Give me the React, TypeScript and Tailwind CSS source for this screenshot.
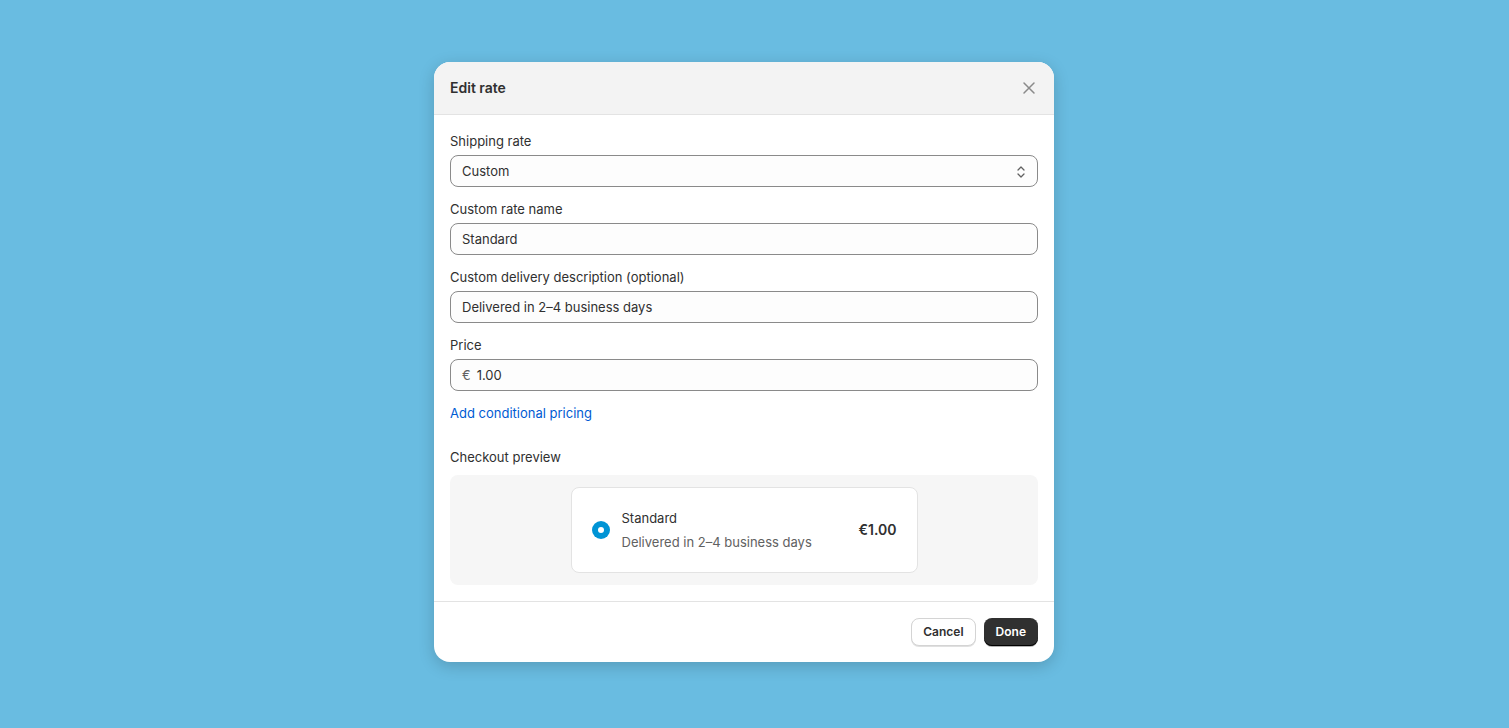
import React from "react";

function Field({ label, children }: { label: string; children: React.ReactNode }) {
  return (
    <div className="flex flex-col gap-1">
      <div className="h-5 leading-5 text-[13px] text-[#303030]">{label}</div>
      {children}
    </div>
  );
}

function Input({ value, prefix }: { value: string; prefix?: string }) {
  return (
    <div className="h-8 rounded-lg border border-[#8a8a8a] bg-[#fdfdfd] pl-[11px] pr-3 pt-px flex items-center text-[13px] text-[#303030]">
      {prefix && <span className="mr-[6px] text-[#616161]">{prefix}</span>}
      <span>{value}</span>
    </div>
  );
}

export default function App() {
  return (
    <div
      className="w-[1509px] h-[728px] bg-[#69bce1] flex justify-start pl-[434px] pt-[62px]"
      style={{ fontFamily: "Inter, 'Noto Sans', sans-serif" }}
    >
      <div className="w-[620px] h-[600px] bg-white rounded-2xl overflow-hidden shadow-[0_4px_16px_rgba(0,0,0,0.18)] flex flex-col">
        <div className="h-[53px] bg-[#f3f3f3] border-b border-[#e3e3e3] flex items-center justify-between pl-4 pr-[18px]">
          <div className="text-sm font-semibold text-[#303030]">Edit rate</div>
          <svg width="14" height="14" viewBox="0 0 14 14" className="text-[#8a8a8a]">
            <path d="M2 2 L12 12 M12 2 L2 12" stroke="currentColor" strokeWidth="1.5" strokeLinecap="round" />
          </svg>
        </div>
        <div className="px-4 pt-4 pb-4 flex flex-col border-b border-[#e3e3e3]">
          <div className="flex flex-col gap-3">
            <Field label="Shipping rate">
              <div className="h-8 rounded-lg border border-[#8a8a8a] bg-[#fdfdfd] pl-[11px] pr-[10px] pt-px flex items-center justify-between text-[13px] text-[#303030]">
                <span>Custom</span>
                <svg width="12" height="16" viewBox="0 0 12 16" className="text-[#616161]">
                  <path d="M3 6 L6 3 L9 6 M3 10 L6 13 L9 10" stroke="currentColor" strokeWidth="1.3" fill="none" strokeLinecap="round" strokeLinejoin="round" />
                </svg>
              </div>
            </Field>
            <Field label="Custom rate name">
              <Input value="Standard" />
            </Field>
            <Field label="Custom delivery description (optional)">
              <Input value="Delivered in 2–4 business days" />
            </Field>
            <Field label="Price">
              <Input value="1.00" prefix="€" />
            </Field>
            <div className="h-5 leading-5 text-[13px] text-[#005bd3]">Add conditional pricing</div>
          </div>
          <div className="mt-6 h-5 leading-5 text-[13px] text-[#303030]">Checkout preview</div>
          <div className="mt-2 h-[110px] rounded-lg bg-[#f6f6f6] flex justify-center pt-3">
            <div className="w-[347px] h-[86px] bg-white rounded-lg border border-[#e3e3e3] flex items-center justify-between pl-5 pr-5">
              <div className="flex items-center gap-3">
                <div className="w-[18px] h-[18px] rounded-full bg-[#0094d5] flex items-center justify-center">
                  <div className="w-[6px] h-[6px] rounded-full bg-white" />
                </div>
                <div className="flex flex-col gap-1">
                  <div className="text-[13px] leading-5 text-[#303030]">Standard</div>
                  <div className="text-[13px] leading-5 text-[#616161]">Delivered in 2–4 business days</div>
                </div>
              </div>
              <div className="text-sm font-semibold text-[#303030]">€1.00</div>
            </div>
          </div>
        </div>
        <div className="flex-1 flex items-center justify-end gap-2 px-4">
          <div className="h-7 px-[11px] rounded-lg border border-[#d4d4d4] bg-white shadow-[0_1px_0_rgba(0,0,0,0.12)] flex items-center text-xs font-semibold text-[#303030]">
            Cancel
          </div>
          <div className="h-7 px-3 rounded-lg bg-[#303030] shadow-[inset_0_-1px_0_#000,0_1px_0_rgba(0,0,0,0.3)] flex items-center text-xs font-semibold text-white">
            Done
          </div>
        </div>
      </div>
    </div>
  );
}
